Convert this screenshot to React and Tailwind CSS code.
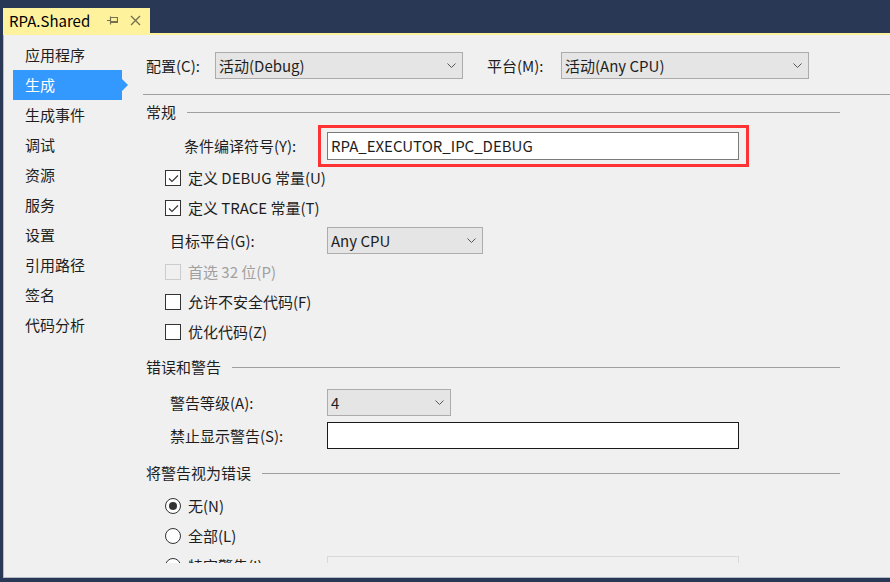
import React from 'react';

const navItems = ['应用程序', '生成', '生成事件', '调试', '资源', '服务', '设置', '引用路径', '签名', '代码分析'];

function Chevron() {
  return (
    <svg width="9" height="5" viewBox="0 0 9 5" className="shrink-0">
      <path d="M0.5 0.5 L4.5 4.5 L8.5 0.5" fill="none" stroke="#555" strokeWidth="1" />
    </svg>
  );
}

function Select({ value, className }) {
  return (
    <div className={`flex items-center justify-between bg-[#e5e5e5] border border-[#acacac] pl-[3px] pr-[6px] ${className}`}>
      <span>{value}</span>
      <Chevron />
    </div>
  );
}

function Checkbox({ label, checked, disabled }) {
  return (
    <div className="flex items-center h-[22px] ml-[19px] gap-[7px]">
      <div className={`w-[16px] h-[16px] border flex items-center justify-center ${disabled ? 'border-[#cccccc] bg-[#f0f0f0]' : 'border-[#333333] bg-white'}`}>
        {checked && (
          <svg width="11" height="9" viewBox="0 0 11 9">
            <path d="M1 4.5 L4 7.5 L10 1.5" fill="none" stroke="#333" strokeWidth="1.1" />
          </svg>
        )}
      </div>
      <span className={disabled ? 'text-[#a0a0a0]' : ''}>{label}</span>
    </div>
  );
}

function Radio({ label, checked }) {
  return (
    <div className="flex items-center h-[22px] ml-[19px] gap-[7px]">
      <div className="w-[16px] h-[16px] rounded-full border border-[#333333] bg-white flex items-center justify-center">
        {checked && <div className="w-[8px] h-[8px] rounded-full bg-[#333333]" />}
      </div>
      <span>{label}</span>
    </div>
  );
}

function Heading({ title, className }) {
  return (
    <div className={`flex items-center h-[20px] gap-[11px] ${className}`}>
      <span>{title}</span>
      <div className="flex-1 h-px bg-[#a0a0a0]" />
    </div>
  );
}

export default function App() {
  return (
    <div className="w-[890px] h-[582px] bg-[#293955] flex flex-col overflow-hidden font-['Noto_Sans_CJK_SC',sans-serif] text-[15px] text-[#1e1e1e] leading-[20px]">
      {/* document tab */}
      <div className="pt-[8px] pl-[3px] flex shrink-0">
        <div className="h-[25px] w-[147px] bg-[#fff29d] flex items-center pl-[6px] text-[15px] text-black">
          <span className="w-[98px]">RPA.Shared</span>
          <svg width="11" height="9" viewBox="0 0 11 9">
            <path d="M0 4.5 H3.5 M3.5 0.5 V8.5 M3.5 1.5 H10.5 V6.5 H3.5 M4 5.5 H10.5" fill="none" stroke="#77704e" strokeWidth="1.2" />
          </svg>
          <svg width="11" height="11" viewBox="0 0 11 11" className="ml-[12px]">
            <path d="M1 1 L10 10 M10 1 L1 10" fill="none" stroke="#77704e" strokeWidth="1.4" />
          </svg>
        </div>
      </div>
      <div className="h-[2px] ml-[3px] bg-[#fff29d] shrink-0" />

      {/* property pages */}
      <div className="flex-1 flex pl-[3px] pb-[4px]">
        <div className="flex-1 flex bg-[#f0f0f0] border-l border-b border-[#b4bccb]">
          <nav className="w-[139px] pt-[5px] flex flex-col">
            {navItems.map((item) =>
              item === '生成' ? (
                <div key={item} className="flex items-center">
                  <div className="ml-[9px] w-[109px] h-[30px] bg-[#3399ff] text-white flex items-center pl-[12px]">{item}</div>
                  <svg width="6" height="12" viewBox="0 0 6 12">
                    <path d="M0 0 L6 6 L0 12 Z" fill="#3399ff" />
                  </svg>
                </div>
              ) : (
                <div key={item} className="ml-[9px] h-[30px] flex items-center pl-[12px]">{item}</div>
              )
            )}
          </nav>

          <main className="flex-1 h-[528px] overflow-hidden pl-[3px] pr-[50px]">
            <div className="flex items-center h-[27px] mt-[17px]">
              <span className="w-[69px]">配置(C):</span>
              <Select value="活动(Debug)" className="w-[248px] h-[27px]" />
              <span className="ml-[24px] w-[74px]">平台(M):</span>
              <Select value="活动(Any CPU)" className="w-[248px] h-[27px]" />
            </div>
            <div className="h-px bg-[#a0a0a0] mt-[15px] -ml-[3px] -mr-[50px]" />

            <Heading title="常规" className="mt-[7px]" />
            <div className="flex items-center mt-[3px] h-[42px]">
              <span className="ml-[38px] w-[134px]">条件编译符号(Y):</span>
              <div className="border-[3px] border-[#ff3333] pl-[6px] pr-[7px] py-[4px]">
                <div className="w-[412px] h-[28px] bg-white border border-[#7a7a7a] flex items-center pl-[3px]">RPA_EXECUTOR_IPC_DEBUG</div>
              </div>
            </div>
            <Checkbox label="定义 DEBUG 常量(U)" checked />
            <div className="mt-[8px]"><Checkbox label="定义 TRACE 常量(T)" checked /></div>
            <div className="flex items-center mt-[8px] h-[27px]">
              <span className="ml-[24px] w-[157px]">目标平台(G):</span>
              <Select value="Any CPU" className="w-[156px] h-[27px]" />
            </div>
            <div className="mt-[7px]"><Checkbox label="首选 32 位(P)" disabled /></div>
            <div className="mt-[8px]"><Checkbox label="允许不安全代码(F)" /></div>
            <div className="mt-[8px]"><Checkbox label="优化代码(Z)" /></div>

            <Heading title="错误和警告" className="mt-[14px]" />
            <div className="flex items-center mt-[12px] h-[27px]">
              <span className="ml-[24px] w-[157px]">警告等级(A):</span>
              <Select value="4" className="w-[124px] h-[27px]" />
            </div>
            <div className="flex items-center mt-[6px] h-[27px]">
              <span className="ml-[24px] w-[157px]">禁止显示警告(S):</span>
              <div className="w-[412px] h-[27px] bg-white border border-[#1a1a1a]" />
            </div>

            <Heading title="将警告视为错误" className="mt-[14px]" />
            <div className="mt-[12px]"><Radio label="无(N)" checked /></div>
            <div className="mt-[8px]"><Radio label="全部(L)" /></div>
            <div className="flex items-start mt-[9px] h-[27px]">
              <div className="flex items-center h-[18px] mt-[1px] ml-[19px] gap-[7px] w-[162px]">
                <div className="w-[16px] h-[16px] rounded-full border border-[#333333] bg-white" />
                <span>特定警告(I):</span>
              </div>
              <div className="w-[412px] h-[27px] bg-[#f0f0f0] border border-[#d9d9d9]" />
            </div>
          </main>
        </div>
      </div>
    </div>
  );
}
